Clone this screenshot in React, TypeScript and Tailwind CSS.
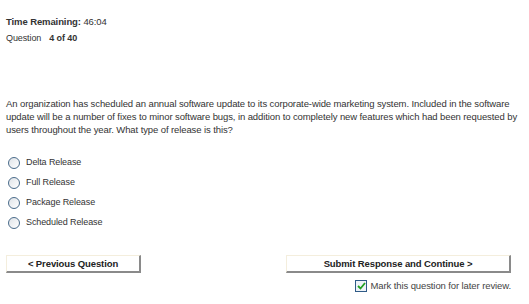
const options = ["Delta Release", "Full Release", "Package Release", "Scheduled Release"];

function Radio() {
  return (
    <span className="inline-block h-[12px] w-[12px] shrink-0 rounded-full border border-[#4a6b8a] bg-gradient-to-br from-[#dfe3e8] to-white" />
  );
}

export default function App() {
  return (
    <div className="h-[304px] w-[529px] bg-white text-[9.5px] tracking-[-0.1px] text-[#333] [font-family:'Liberation_Sans',Arial,sans-serif]">
      <div className="px-[6px] pt-[15px]">
        <div className="leading-[13px]">
          <span className="font-bold">Time Remaining:</span> <span>46:04</span>
        </div>
        <div className="mt-[4px] flex gap-[8px] text-[9px] leading-[13px]">
          <span>Question</span>
          <span className="font-bold">4 of 40</span>
        </div>
        <p className="mt-[52px] w-[515px] leading-[13px]">
          An organization has scheduled an annual software update to its corporate-wide marketing system. Included in the software update will be a number of fixes to minor software bugs, in addition to completely new features which had been requested by users throughout the year. What type of release is this?
        </p>
        <div className="mt-[21px] flex flex-col gap-[8px]">
          {options.map((o) => (
            <label key={o} className="flex h-[12px] items-center gap-[6px] pl-[2px] text-[9px]">
              <Radio />
              <span>{o}</span>
            </label>
          ))}
        </div>
        <div className="mt-[26px] flex items-start justify-between pr-[12px]">
          <button className="h-[18px] w-[135px] border border-[#f4eedd] border-b-[#8a8a8a] border-r-[#8a8a8a] border-b-2 border-r-2 bg-white font-bold leading-[14px] text-[#222]">
            &lt; Previous Question
          </button>
          <div className="flex flex-col items-end">
            <button className="h-[18px] w-[225px] border border-[#f4eedd] border-b-[#8a8a8a] border-r-[#8a8a8a] border-b-2 border-r-2 bg-white font-bold leading-[14px] text-[#222]">
              Submit Response and Continue &gt;
            </button>
            <label className="mt-[6px] flex items-center gap-[3px] text-[#444]">
              <span className="flex h-[12px] w-[12px] items-center justify-center border border-[#2f5b87] bg-[#eef3f8]">
                <svg width="9" height="8" viewBox="0 0 9 8">
                  <path d="M1 4 L3.5 6.5 L8 1" stroke="#21a121" strokeWidth="1.8" fill="none" />
                </svg>
              </span>
              <span>Mark this question for later review.</span>
            </label>
          </div>
        </div>
      </div>
    </div>
  );
}
